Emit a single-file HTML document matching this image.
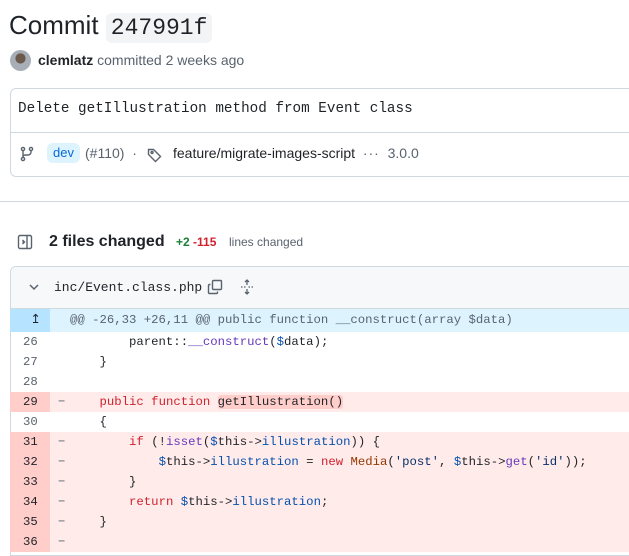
<!DOCTYPE html>
<html><head><style>
*{margin:0;padding:0;box-sizing:border-box}
body{width:629px;height:544px;overflow:hidden;background:#fff;font-family:"Liberation Sans",sans-serif;color:#1f2328;position:relative}
.abs{position:absolute}
.mono{font-family:"Liberation Mono",monospace}
.row{position:absolute;left:10px;width:640px;height:20px;font-family:"Liberation Mono",monospace;font-size:12.3px;line-height:20px;white-space:pre}
.row .n{position:absolute;left:0;width:40px;height:20px;padding-left:13px;color:#59636e}
.row .s{position:absolute;left:48px;color:#59636e}
.row .c{position:absolute;left:60px}
.del{background:#ffebe9}
.del .n{background:#ffcecb;color:#1f2328}
.k{color:#cf222e}.f{color:#6639ba}.v{color:#0550ae}.o{color:#953800}.str{color:#0a3069}
</style></head><body>
<div class="abs" style="left:9px;top:8px;font-size:26px;line-height:34px">Commit <span class="mono" style="background:#f3f4f6;border-radius:6px;padding:2px 5px;font-size:23px">247991f</span></div>
<div class="abs" style="left:10px;top:50px;width:21px;height:21px;border-radius:50%;background:radial-gradient(circle at 50% 40%,#6b5a4c 0 30%,#a7aeb5 32%)"></div>
<div class="abs" style="left:38px;top:52px;font-size:14px;color:#59636e"><b style="color:#1f2328">clemlatz</b> committed 2 weeks ago</div>
<div class="abs" style="left:10px;top:88px;width:640px;height:89px;border:1px solid #d1d9e0;border-radius:6px">
 <div class="mono" style="position:absolute;left:7px;top:12px;font-size:14.3px">Delete getIllustration method from Event class</div>
 <div style="position:absolute;left:0;top:43px;width:100%;border-top:1px solid #d1d9e0"></div>
 <svg style="position:absolute;left:9px;top:57px" width="14" height="16" viewBox="0 0 14 16" fill="none" stroke="#59636e" stroke-width="1.4"><circle cx="3" cy="3" r="1.6"/><circle cx="3" cy="13" r="1.6"/><circle cx="11" cy="3" r="1.6"/><path d="M3 4.6v6.8M11 4.6v1.4a3 3 0 0 1-3 3H5a2 2 0 0 0-2 2"/></svg>
 <div style="position:absolute;left:36px;top:54px;background:#ddf4ff;color:#0969da;border-radius:6px;padding:2px 6px;font-size:13px;line-height:16px">dev</div>
 <div style="position:absolute;left:74px;top:56px;font-size:14px;color:#59636e">(#110) &nbsp;·</div>
 <svg style="position:absolute;left:136px;top:58px" width="16" height="16" viewBox="0 0 16 16" fill="none" stroke="#59636e" stroke-width="1.4"><path d="M1.5 2.5v5l7 7 5-5-7-7z"/><circle cx="5" cy="5.5" r="1"/></svg>
 <div style="position:absolute;left:162px;top:56px;font-size:14px">feature/migrate-images-script &nbsp;<span style="color:#59636e;letter-spacing:1px">···</span>&nbsp; <span style="color:#59636e">3.0.0</span></div>
</div>
<div class="abs" style="left:0;top:201px;width:629px;border-top:1px solid #d1d9e0"></div>
<svg class="abs" style="left:17px;top:234px" width="16" height="16" viewBox="0 0 16 16" fill="none" stroke="#59636e" stroke-width="1.4"><rect x="1.5" y="1.5" width="13" height="13" rx="1.5"/><path d="M10 1.5v13"/><path d="M5.5 6l2 2-2 2" fill="#59636e"/></svg>
<div class="abs" style="left:49px;top:233px;font-size:16px;font-weight:bold">2 files changed</div>
<div class="abs" style="left:176px;top:235px;font-size:12px;font-weight:bold"><span style="color:#1a7f37">+2</span> <span style="color:#cf222e">-115</span></div>
<div class="abs" style="left:229px;top:235px;font-size:12px;color:#59636e">lines changed</div>
<div class="abs" style="left:10px;top:266px;width:640px;height:290px;border:1px solid #d1d9e0;border-radius:6px 6px 0 0;overflow:hidden">
 <div style="position:absolute;left:0;top:0;width:100%;height:42px;background:#f6f8fa;border-bottom:1px solid #d1d9e0"></div>
</div>
<svg class="abs" style="left:28px;top:282px" width="12" height="10" viewBox="0 0 12 10" fill="none" stroke="#59636e" stroke-width="1.5"><path d="M2 3l4 4 4-4"/></svg>
<div class="abs mono" style="left:54px;top:280px;font-size:13px">inc/Event.class.php</div>
<svg class="abs" style="left:207px;top:279px" width="16" height="16" viewBox="0 0 16 16" fill="none" stroke="#59636e" stroke-width="1.4"><rect x="5.5" y="1.5" width="9" height="9" rx="1"/><path d="M3.5 5.5h-1a1 1 0 0 0-1 1v7a1 1 0 0 0 1 1h7a1 1 0 0 0 1-1v-1"/></svg>
<svg class="abs" style="left:239px;top:279px" width="16" height="16" viewBox="0 0 16 16" fill="none" stroke="#59636e" stroke-width="1.3"><path d="M8 1v5M6 3l2-2 2 2M8 15v-5M6 13l2 2 2-2" /><path d="M2 8h1.5M5 8h1.5M9.5 8h1.5M12.5 8h1.5"/></svg>
<div class="row" style="top:309px;height:23px;line-height:23px;background:#ddf4ff"><span class="n" style="background:#b6e3ff;height:23px;color:#1f2328">&nbsp;↥</span><span class="c" style="color:#59636e">@@ -26,33 +26,11 @@ public function __construct(array $data)</span></div>
<div class="row" style="top:332px"><span class="n">26</span><span class="c">        parent::<span class="f">__construct</span>(<span class="v">$</span>data);</span></div>
<div class="row" style="top:352px"><span class="n">27</span><span class="c">    }</span></div>
<div class="row" style="top:372px"><span class="n">28</span><span class="c"></span></div>
<div class="row del" style="top:392px"><span class="n">29</span><span class="s">−</span><span class="c">    <span class="k">public function</span> <span style="background:#ffcecb;border-radius:3px">getIllustration()</span></span></div>
<div class="row" style="top:412px"><span class="n">30</span><span class="c">    {</span></div>
<div class="row del" style="top:432px"><span class="n">31</span><span class="s">−</span><span class="c">        <span class="k">if</span> (!<span class="f">isset</span>(<span class="v">$</span>this-&gt;<span class="v">illustration</span>)) {</span></div>
<div class="row del" style="top:452px"><span class="n">32</span><span class="s">−</span><span class="c">            <span class="v">$</span>this-&gt;<span class="v">illustration</span> = <span class="k">new</span> <span class="o">Media</span>(<span class="str">'post'</span>, <span class="v">$</span>this-&gt;<span class="f">get</span>(<span class="str">'id'</span>));</span></div>
<div class="row del" style="top:472px"><span class="n">33</span><span class="s">−</span><span class="c">        }</span></div>
<div class="row del" style="top:492px"><span class="n">34</span><span class="s">−</span><span class="c">        <span class="k">return</span> <span class="v">$</span>this-&gt;<span class="v">illustration</span>;</span></div>
<div class="row del" style="top:512px"><span class="n">35</span><span class="s">−</span><span class="c">    }</span></div>
<div class="row del" style="top:532px"><span class="n">36</span><span class="s">−</span><span class="c"></span></div>
</body></html>
